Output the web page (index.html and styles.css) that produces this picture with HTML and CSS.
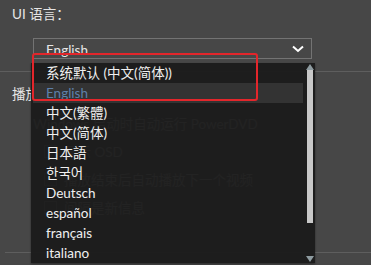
FILE: index.html
```html
<!DOCTYPE html>
<html lang="zh-CN">
<head>
    <meta charset="UTF-8">
    <title>UI 语言</title>
    <link rel="stylesheet" href="styles.css">
</head>
<body>
    <div class="settings">
        <div class="field-label">UI 语言：</div>
        <div class="select">
            <span class="select-value">English</span>
            <svg class="chevron" width="12" height="8" viewBox="0 0 12 8">
                <path d="M1 1.5 L6 6 L11 1.5" fill="none" stroke="#fff" stroke-width="2"/>
            </svg>
        </div>
        <div class="divider"></div>

        <div class="section-title">播放</div>
        <div class="option first">
            <span>Windows 启动时自动运行 PowerDVD</span>
        </div>
        <div class="option">
            <span class="checkbox"></span>
            <span>显示 OSD</span>
        </div>
        <div class="option">
            <span class="checkbox"></span>
            <span>播放结束后自动播放下一个视频</span>
        </div>
        <div class="option">
            <span class="checkbox"></span>
            <span>间隔是新信息</span>
        </div>
        <div class="divider bottom"></div>
    </div>

    <!-- open dropdown of the language select -->
    <div class="dropdown">
        <ul class="dropdown-list">
            <li>系统默认 (中文(简体))</li>
            <li class="selected">English</li>
            <li>中文(繁體)</li>
            <li>中文(简体)</li>
            <li>日本語</li>
            <li>한국어</li>
            <li>Deutsch</li>
            <li>español</li>
            <li>français</li>
            <li>italiano</li>
        </ul>
        <div class="scrollbar">
            <span class="arrow up"></span>
            <span class="thumb"></span>
            <span class="arrow down"></span>
        </div>
    </div>

    <div class="highlight-box"></div>
</body>
</html>
```

FILE: styles.css
```css
/* Basic Styling */
body {
    margin: 0;
    padding: 0;
    width: 371px;
    height: 265px;
    overflow: hidden;
    background-color: #474747;
    color: #e6e6e6;
    font-family: Lato, "Noto Sans CJK SC", sans-serif;
    font-size: 13.5px;
}

.settings {
    padding-top: 4px;
}

.field-label {
    margin-left: 12px;
    height: 20px;
    line-height: 20px;
}

.select {
    margin: 14px 0 0 33px;
    width: 279px;
    height: 21px;
    box-sizing: border-box;
    border: 1px solid #737373;
    display: flex;
    align-items: center;
    justify-content: space-between;
    padding: 0 7px 0 12px;
}

.select-value {
    line-height: 19px;
    margin-top: 3px;
}

.divider {
    margin-top: 12px;
    height: 1px;
    background-color: #5e5e5e;
}

.divider.bottom {
    margin: 35px 0 0 5px;
}

.section-title {
    margin: 12px 0 0 12px;
    height: 20px;
    line-height: 20px;
}

.option {
    display: flex;
    align-items: center;
    gap: 7px;
    margin: 8px 0 0 44px;
    height: 20px;
    color: #d0d0d0;
}

.option.first {
    margin: 9px 0 0 33px;
}

.checkbox {
    width: 11px;
    height: 11px;
    border: 1px solid #8a8a8a;
}

/* Dropdown overlay */
.dropdown {
    position: absolute;
    left: 31px;
    top: 63px;
    width: 284px;
    height: 200px;
    background-color: rgba(28, 28, 28, 0.965);
    box-shadow: 0 1px 2px rgba(0, 0, 0, 0.4);
}

.dropdown-list {
    list-style: none;
    margin: 0;
    padding: 0 0 0 2px;
    width: 270px;
}

.dropdown-list li {
    height: 20px;
    line-height: 20px;
    padding-left: 13px;
    color: #f0f0f0;
    white-space: nowrap;
}

.dropdown-list li.selected {
    background-color: #333333;
    color: #5e80aa;
}

.scrollbar {
    position: absolute;
    top: 1px;
    right: 2px;
    bottom: 1px;
    width: 6px;
    display: flex;
    flex-direction: column;
    align-items: center;
}

.arrow {
    width: 0;
    height: 0;
    border-left: 4px solid transparent;
    border-right: 4px solid transparent;
}

.arrow.up {
    border-bottom: 6px solid #8e9ba0;
}

.arrow.down {
    margin-top: auto;
    border-top: 6px solid #8e9ba0;
}

.thumb {
    width: 6px;
    height: 153px;
    background-color: #c8c8c8;
}

/* Red annotation frame */
.highlight-box {
    position: absolute;
    left: 32px;
    top: 53px;
    width: 226px;
    height: 48px;
    box-sizing: border-box;
    border: 2.5px solid #e3262b;
    border-radius: 3px;
}
```
